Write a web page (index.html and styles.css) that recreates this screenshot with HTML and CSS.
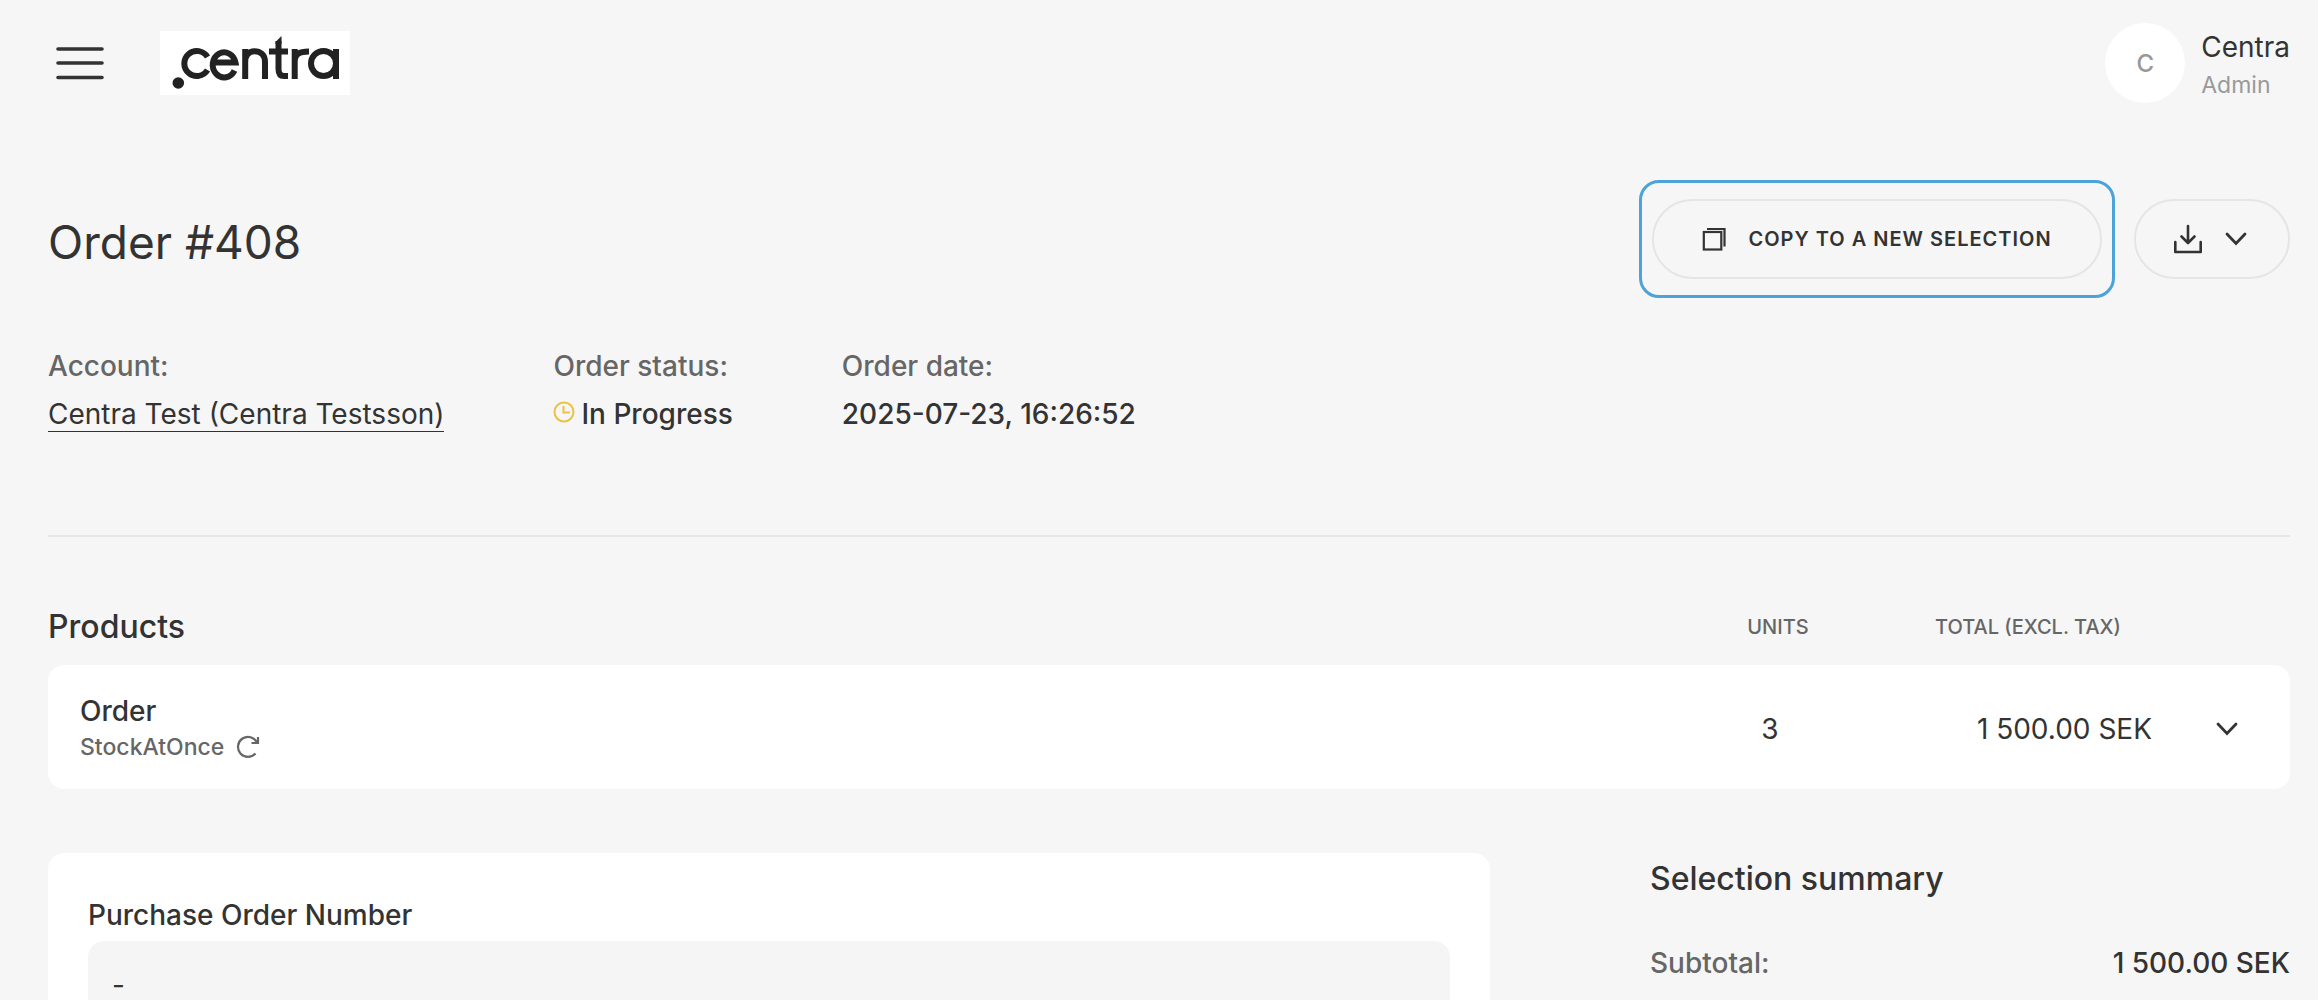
FILE: index.html
```html
<!DOCTYPE html>
<html lang="en">
<head>
<meta charset="utf-8">
<meta name="viewport" content="width=device-width, initial-scale=1">
<title>Order #408</title>
<link rel="stylesheet" href="styles.css">
</head>
<body>
<header class="topbar">
  <button class="menu-button" type="button" aria-label="Menu">
    <svg width="48" height="34" viewBox="0 0 48 34" fill="none" stroke="currentColor" stroke-width="3.600" stroke-linecap="round"><path d="M2 3h44M2 17h44M2 31.500h44"/></svg>
  </button>
  <a class="logo" href="#" aria-label="Centra">
    <svg width="190" height="64" viewBox="0 0 190 64" fill="none" stroke="#222" stroke-width="6">
      <circle cx="18.300" cy="52" r="5.800" fill="#222" stroke="none"/>
      <path d="M47.500 26A12.500 12.500 0 1 0 47.500 39"/>
      <path d="M53 31.500H75.500A11.500 12.500 0 1 0 74.500 39.500"/>
      <path d="M85.200 48V18M85.200 31C85.200 23.500 89 20.200 94.500 20.200S105 23.500 105 31V48"/>
      <path d="M109 20.500H128M118.500 10V38Q118.500 45 124 45H128"/>
      <path d="M115.500 11L121.500 5V13H115.500Z" fill="#222" stroke="none"/>
      <path d="M134.700 48V18M134.700 31C134.700 23 139 20.500 149 20.500"/>
      <circle cx="163.500" cy="32.500" r="12.500"/>
      <path d="M176 18V48"/>
    </svg>
  </a>
  <div class="user">
    <span class="avatar">C</span>
    <div class="user-text">
      <span class="user-name">Centra</span>
      <span class="user-role">Admin</span>
    </div>
  </div>
</header>

<main class="page">
  <section class="order-head">
    <h1>Order #408</h1>
    <div class="actions">
      <div class="highlight">
        <button class="pill copy" type="button">
          <svg width="24" height="24" viewBox="0 0 24 24" fill="none" stroke="currentColor" stroke-width="2.200"><rect x="1.800" y="5" width="17.500" height="17.500"/><path d="M5 2H22.500V19.500"/></svg>
          Copy to a new selection
        </button>
      </div>
      <button class="pill download" type="button" aria-label="Download">
        <svg width="30" height="30" viewBox="0 0 30 30" fill="none" stroke="currentColor" stroke-width="2.600" stroke-linecap="round" stroke-linejoin="round"><path d="M15 2V18.500M8.500 12.500L15 19L21.500 12.500M2.300 18V28H27.700V18"/></svg>
        <svg width="22" height="14" viewBox="0 0 22 14" fill="none" stroke="currentColor" stroke-width="2.800" stroke-linecap="round"><path d="M2 2L11 11.500L20 2"/></svg>
      </button>
    </div>
  </section>

  <dl class="details">
    <div><dt>Account:</dt><dd><a class="account" href="#">Centra Test (Centra Testsson)</a></dd></div>
    <div><dt>Order status:</dt><dd class="status"><svg width="22" height="22" viewBox="0 0 22 22" fill="none" stroke="#ecc244" stroke-width="2"><circle cx="11" cy="11" r="9.500"/><path d="M10.500 5V11.500H17"/></svg>In Progress</dd></div>
    <div><dt>Order date:</dt><dd>2025-07-23, 16:26:52</dd></div>
  </dl>

  <section class="products">
    <div class="products-head">
      <h2>Products</h2>
      <span class="col-label col-units">Units</span>
      <span class="col-label col-total">Total (excl. tax)</span>
    </div>
    <div class="product-row">
      <div>
        <h3>Order</h3>
        <p class="stock">StockAtOnce
          <svg width="24" height="24" viewBox="0 0 24 24" fill="none" stroke="currentColor" stroke-width="2.200"><path d="M19.500 18.500A10 10 0 1 1 21 7.500M22 2V8H15.500"/></svg>
        </p>
      </div>
      <span class="units">3</span>
      <span class="amount">1 500.00 SEK</span>
      <button class="expand" type="button" aria-label="Show products">
        <svg width="22" height="14" viewBox="0 0 22 14" fill="none" stroke="currentColor" stroke-width="2.800" stroke-linecap="round"><path d="M2 2L11 11.500L20 2"/></svg>
      </button>
    </div>
  </section>

  <div class="columns">
    <form class="card">
      <label for="po">Purchase Order Number</label>
      <input id="po" type="text" value="-" readonly>
    </form>
    <aside class="summary">
      <h2>Selection summary</h2>
      <div class="summary-line"><span>Subtotal:</span><strong>1 500.00 SEK</strong></div>
    </aside>
  </div>
</main>
</body>
</html>
```
FILE: styles.css
```css
* { box-sizing: border-box; }
body { margin: 0; background: #f6f6f6; color: #333; font: 28px/36px Inter, "Liberation Sans", sans-serif; }
h1, h2, h3, p, dl, dd { margin: 0; }
h2, h3, dt, dd, label, strong { font-weight: 500; }
button { padding: 0; border: 0; background: none; color: inherit; font: inherit; }
svg { display: block; flex: none; }

.topbar { display: flex; align-items: center; height: 126px; padding: 0 28px 0 56px; }
.logo { margin-left: 56px; background: #fff; }
.user { display: flex; align-items: center; gap: 16px; margin-left: auto; }
.avatar { display: grid; place-items: center; width: 80px; height: 80px; padding-top: 2px; border-radius: 50%; background: #fff; color: #999; font-size: 24px; font-weight: 500; }
.user-text { display: flex; flex-direction: column; gap: 2px; padding-top: 6px; }
.user-role { color: #999; font-size: 23px; }

.page { padding: 54px 28px 40px 48px; }
.order-head { display: flex; align-items: center; justify-content: space-between; }
h1 { padding-top: 6px; font-size: 46px; line-height: 56px; font-weight: 400; }
.actions { display: flex; align-items: center; gap: 19px; }
.highlight { padding: 16px 10px; border: 3px solid #4aa3d9; border-radius: 20px; }
.pill { display: flex; align-items: center; justify-content: center; height: 80px; border: 2px solid #e5e5e5; border-radius: 40px; }
.copy { gap: 22px; width: 450px; font-size: 20px; font-weight: 600; letter-spacing: 1px; text-transform: uppercase; }
.download { gap: 22px; width: 156px; padding-right: 4px; }

.details { display: flex; gap: 109px; padding: 50px 0 103px; border-bottom: 2px solid #e5e5e5; }
dt { margin-bottom: 12px; color: #666; font-weight: 500; }
.account { border-bottom: 1px solid #333; color: inherit; font-weight: 400; text-decoration: none; }
.status { display: flex; align-items: center; gap: 6px; }
.status svg { margin-bottom: 4px; }

.products-head, .product-row { display: grid; grid-template-columns: 1fr 100px 332px 106px; align-items: center; }
.products-head { padding: 70px 32px 18px 0; }
h2 { font-size: 32px; line-height: 40px; }
h3 { font-size: 28px; }
.col-label { color: #666; font-size: 20px; font-weight: 500; text-transform: uppercase; }
.col-units { padding-left: 16px; text-align: center; }
.col-total { padding-right: 31px; text-align: right; }
.product-row { height: 124px; padding: 4px 32px 0; border-radius: 16px; background: #fff; }
.units { text-align: center; }
.amount { text-align: right; }
.stock { display: flex; align-items: center; gap: 12px; color: #666; font-size: 23px; font-weight: 500; }
.expand { justify-self: end; padding: 12px 20px; }

.columns { display: grid; grid-template-columns: 1fr 640px; gap: 160px; margin-top: 64px; }
.card { padding: 44px 40px 40px; border-radius: 16px; background: #fff; }
label { display: block; margin-bottom: 8px; }
input { display: block; width: 100%; height: 88px; padding: 0 24px; border: 0; border-radius: 16px; background: #f5f5f5; color: inherit; font: inherit; }
.summary { padding-top: 6px; }
.summary-line { display: flex; justify-content: space-between; margin-top: 46px; color: #666; font-weight: 500; }
strong { color: #333; }
```
